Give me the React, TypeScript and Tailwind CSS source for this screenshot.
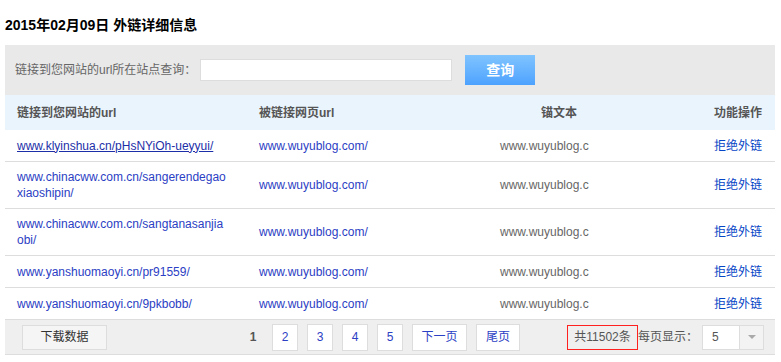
const rows = [
  { src: "www.klyinshua.cn/pHsNYiOh-ueyyui/", first: true },
  { src: "www.chinacww.com.cn/sangerendegaoxiaoshipin/" },
  { src: "www.chinacww.com.cn/sangtanasanjiaobi/" },
  { src: "www.yanshuomaoyi.cn/pr91559/" },
  { src: "www.yanshuomaoyi.cn/9pkbobb/" },
];

const font = { fontFamily: '"Liberation Sans", Arial, "Noto Sans CJK SC", sans-serif' };

const App: React.FC = () => {
  return (
    <div className="w-[781px] bg-white pl-[5px] text-[12px]" style={font}>
      <h1 className="pt-[15px] pb-[10px] text-[14px] leading-5 font-bold text-black">2015年02月09日 外链详细信息</h1>
      <div className="w-[770px]">
        <div className="flex h-[50px] items-center bg-[#e9e9e9] pl-[10px]">
          <span className="text-[#666]">链接到您网站的url所在站点查询：</span>
          <input className="ml-[4px] h-[22px] w-[252px] border border-[#ddd] bg-white outline-none" />
          <button className="ml-[13px] h-[30px] w-[70px] bg-gradient-to-b from-[#80c4ff] to-[#4da2ff] text-[14px] font-bold text-white">
            查询
          </button>
        </div>
        <div className="grid h-[35px] grid-cols-[242px_213px_198px_117px] items-center bg-[#eaf4fd] font-bold text-[#555]">
          <div className="pl-[12px]">链接到您网站的url</div>
          <div className="pl-[12px]">被链接网页url</div>
          <div className="text-center">锚文本</div>
          <div className="pr-[13px] text-right">功能操作</div>
        </div>
        {rows.map((r) => (
          <div
            key={r.src}
            className="grid min-h-[32px] grid-cols-[242px_213px_198px_117px] items-center border-b border-[#ddd] leading-4"
          >
            <div className="py-[7px] pl-[12px]">
              <a className={`block w-[212px] break-all ${r.first ? "text-[#1d2fa8] underline" : "text-[#2b40c4]"}`}>
                {r.src}
              </a>
            </div>
            <div className="pl-[12px] text-[#2b40c4]">www.wuyublog.com/</div>
            <div className="pl-[40px] text-[#666]">www.wuyublog.c</div>
            <div className="pr-[13px] text-right text-[#0645c6]">拒绝外链</div>
          </div>
        ))}
        <div className="flex h-[35px] items-center border-b border-[#ddd] bg-[#efefef] text-[#333]">
          <button className="ml-[17px] h-[25px] w-[85px] border border-[#ddd] bg-[#f5f5f5] text-[#333]">下载数据</button>
          <span className="ml-[140px] w-[12px] text-center font-bold text-[#555]">1</span>
          <div className="ml-[13px] flex gap-[9px] text-[#2b40c4]">
            {["2", "3", "4", "5"].map((n) => (
              <span key={n} className="flex h-[27px] w-[26px] items-center justify-center border border-[#ddd] bg-white">
                {n}
              </span>
            ))}
            <span className="flex h-[27px] w-[55px] items-center justify-center border border-[#ddd] bg-white">下一页</span>
            <span className="flex h-[27px] w-[44px] items-center justify-center border border-[#ddd] bg-white">尾页</span>
          </div>
          <div className="ml-[47px] flex h-[25px] w-[71px] items-center justify-center text-[#555] shadow-[inset_0_0_0_1px_#ff2020]">
            共11502条
          </div>
          <span className="text-[#555]">每页显示：</span>
          <div className="ml-[4px] flex h-[25px] w-[62px] border border-[#ddd] bg-white">
            <span className="flex-1 pl-[9px] leading-[23px] text-[#555]">5</span>
            <span className="flex w-[24px] items-center justify-center border-l border-[#ddd] bg-[#f3f3f3]">
              <span className="h-0 w-0 border-x-[4px] border-t-[4px] border-x-transparent border-t-[#aaa]" />
            </span>
          </div>
        </div>
      </div>
    </div>
  );
};

export default App;
